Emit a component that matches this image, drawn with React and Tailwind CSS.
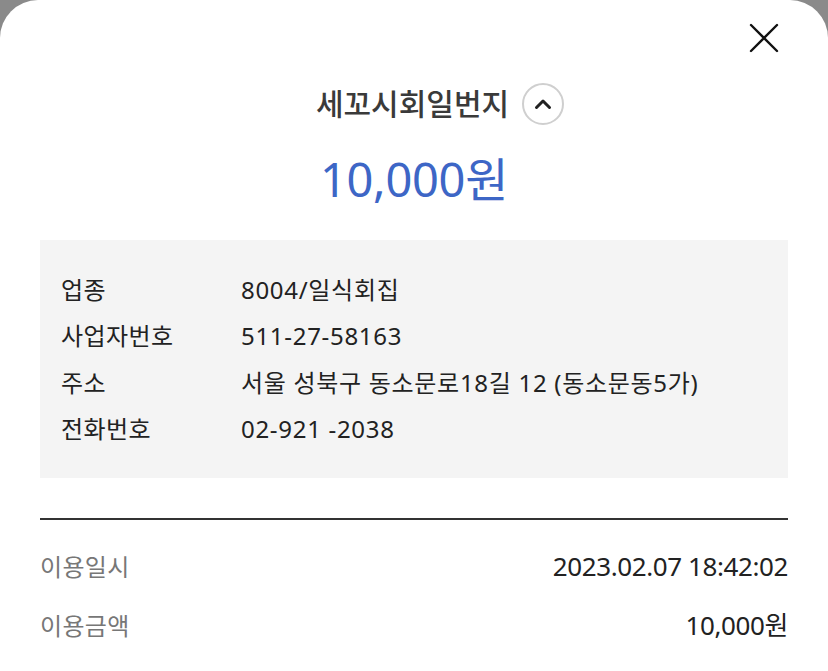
const font = { fontFamily: '"Noto Sans", "Noto Sans CJK KR", sans-serif' }

const storeInfo = [
  ['업종', '8004/일식회집'],
  ['사업자번호', '511-27-58163'],
  ['주소', '서울 성북구 동소문로18길 12 (동소문동5가)'],
  ['전화번호', '02-921 -2038'],
]

const payInfo = [
  ['이용일시', '2023.02.07 18:42:02'],
  ['이용금액', '10,000원'],
  ['할인금액', '0원'],
]

function CloseIcon() {
  return (
    <svg width="30" height="30" viewBox="0 0 30 30" fill="none">
      <path d="M2 2L28 28M28 2L2 28" stroke="#111" strokeWidth="2.4" strokeLinecap="round" />
    </svg>
  )
}

function ChevronUp() {
  return (
    <div className="flex h-[42px] w-[42px] items-center justify-center rounded-full border-2 border-[#cfcfcf]">
      <svg width="18" height="12" viewBox="0 0 18 12" fill="none">
        <path d="M2.5 9.5L9 3L15.5 9.5" stroke="#222" strokeWidth="3" strokeLinecap="round" strokeLinejoin="round" />
      </svg>
    </div>
  )
}

export default function App() {
  return (
    <div className="h-[671px] w-[828px] overflow-hidden bg-[#8a8a8a]" style={font}>
      <div className="h-full rounded-t-[38px] bg-white">
        <div className="flex justify-end pr-[49px] pt-[23px]">
          <CloseIcon />
        </div>

        <div className="mt-[30px] flex items-center justify-center gap-[13px] pl-[52px]">
          <h2 className="text-[30px] leading-[40px] font-medium tracking-[0px] text-[#3a3a3a]">세꼬시회일번지</h2>
          <ChevronUp />
        </div>

        <p className="mt-[26px] text-center text-[47px] leading-[56px] tracking-[-0.3px] text-[#3d66c6]">
          10,000원
        </p>

        <div className="mx-[40px] mt-[33px] bg-[#f4f4f4] px-[21px] pb-[26px] pt-[27px]">
          {storeInfo.map(([label, value]) => (
            <div className="flex text-[24px] leading-[46.3px] text-[#222]" key={label}>
              <span className="w-[180px] shrink-0 tracking-[0.4px]">{label}</span>
              <span className="tracking-[0.7px]">{value}</span>
            </div>
          ))}
        </div>

        <div className="mx-[40px] mt-[40px] h-[2px] bg-[#333]" />

        <div className="mx-[40px] mt-[17px]">
          {payInfo.map(([label, value]) => (
            <div className="flex items-center justify-between leading-[59px]" key={label}>
              <span className="text-[24px] tracking-[0.3px] text-[#777]">{label}</span>
              <span className="text-[26px] tracking-[-0.4px] text-[#222]">{value}</span>
            </div>
          ))}
        </div>
      </div>
    </div>
  )
}
